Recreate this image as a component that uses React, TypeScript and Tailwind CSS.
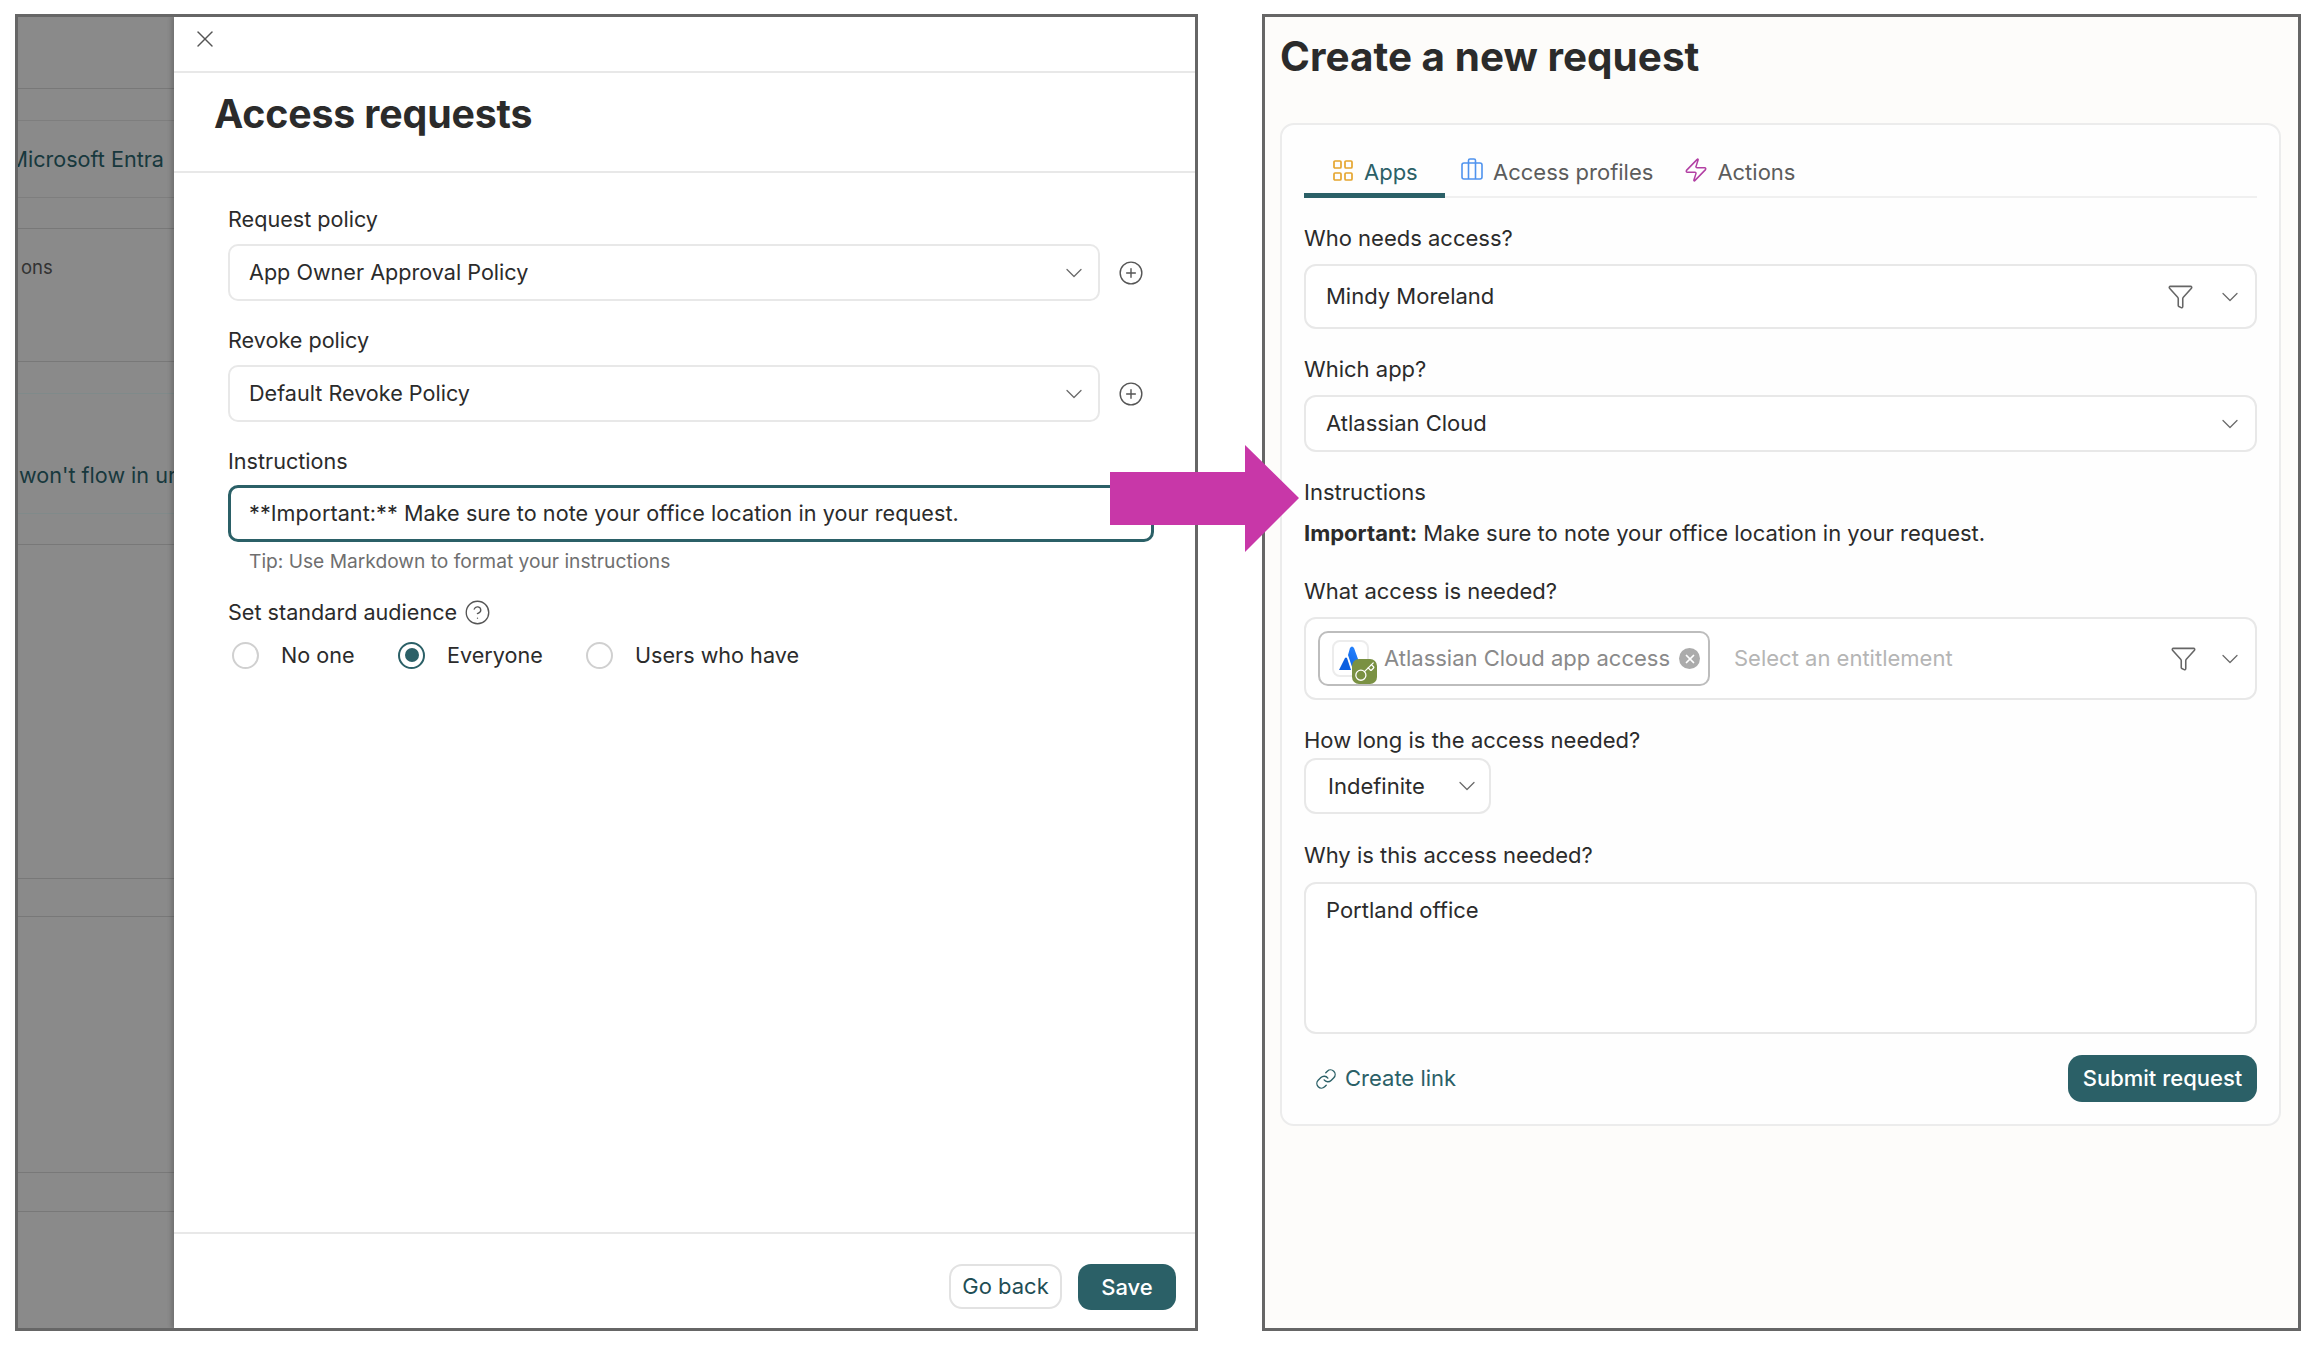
import { ChevronDown, CirclePlus, CircleHelp, Filter, Key, Link, X, Zap } from "lucide-react";

function Label({ children, className = "" }: { children: React.ReactNode; className?: string }) {
  return <div className={`h-[30px] leading-[30px] text-[22px] text-[#2b2b2b] ${className}`}>{children}</div>;
}

function LeftLabel({ children, className = "" }: { children: React.ReactNode; className?: string }) {
  return <div className={`h-[30px] leading-[30px] text-[21.6px] text-[#2b2b2b] ${className}`}>{children}</div>;
}

function Chevron() {
  return <ChevronDown className="w-[28px] h-[28px] text-[#6b6b6b]" strokeWidth={1.1} />;
}

function Select({ value }: { value: string }) {
  return (
    <div className="flex-1 h-[57px] rounded-[10px] border-2 border-[#e8e8e8] bg-white flex items-center justify-between pl-[19px] pr-[10px]">
      <span className="text-[21.6px] text-[#2b2b2b]">{value}</span>
      <Chevron />
    </div>
  );
}

function Radio({ label, checked, width }: { label: string; checked?: boolean; width: string }) {
  return (
    <div className={`flex items-center gap-[22px] h-[30px] ${width}`}>
      {checked ? (
        <span className="w-[27px] h-[27px] rounded-full border-2 border-[#2b6067] flex items-center justify-center">
          <span className="w-[14px] h-[14px] rounded-full bg-[#2b6067]" />
        </span>
      ) : (
        <span className="w-[27px] h-[27px] rounded-full border-2 border-[#d0d0d0] bg-white" />
      )}
      <span className="text-[21.6px] text-[#2b2b2b]">{label}</span>
    </div>
  );
}

export default function App() {
  return (
    <div className="relative w-[2318px] h-[1348px] bg-white overflow-hidden flex items-start pt-[14px] pl-[15px] font-['Inter',sans-serif]">
      {/* Left window */}
      <div className="w-[1183px] h-[1317px] border-[3px] border-[#666666] flex overflow-hidden">
        <div className="w-[156px] shrink-0 bg-[#8a8a8a] text-[21.6px] text-[#17383d] flex flex-col overflow-hidden">
          <div className="h-[72px] border-b border-[#787878]" />
          <div className="h-[32px] border-b border-[#7e7e7e]" />
          <div className="h-[77px] border-b border-[#7e7e7e] flex items-center justify-end pr-[10px] pt-[1px] whitespace-nowrap">Microsoft Entra</div>
          <div className="h-[31px] border-b border-[#787878]" />
          <div className="h-[133px] border-b border-[#787878] pl-[3px] pt-[25px] text-[18.5px] text-[#333333]">ons</div>
          <div className="h-[32px] border-b border-[#7f8a8a]" />
          <div className="h-[120px] border-b border-[#808a8a] pl-[1px] pt-[65px] whitespace-nowrap">won't flow in ur</div>
          <div className="h-[31px] border-b border-[#787878]" />
          <div className="h-[334px] border-b border-[#787878]" />
          <div className="h-[38px] border-b border-[#787878]" />
          <div className="h-[256px] border-b border-[#787878]" />
          <div className="h-[39px] border-b border-[#787878]" />
        </div>

        <div className="flex-1 bg-white flex flex-col shadow-[-3px_0_4px_rgba(0,0,0,0.18)]">
          <div className="h-[56px] shrink-0 border-b-2 border-[#e8e8e8] flex items-start pt-[8px] pl-[17px]">
            <X className="w-[28px] h-[28px] text-[#555555]" strokeWidth={1.2} />
          </div>
          <div className="h-[100px] shrink-0 border-b-2 border-[#e8e8e8] pl-[40px] pt-[13px]">
            <h1 className="text-[39.3px] leading-[56px] font-bold text-[#2b2b2b] tracking-[-0.15px]">Access requests</h1>
          </div>

          <div className="flex-1 pl-[54px] pr-[41px] pt-[31px]">
            <LeftLabel>Request policy</LeftLabel>
            <div className="mt-[10px] flex items-center">
              <Select value="App Owner Approval Policy" />
              <CirclePlus className="w-[26px] h-[26px] ml-[18px] mr-[10px] text-[#555555]" strokeWidth={1.3} />
            </div>
            <LeftLabel className="mt-[24px]">Revoke policy</LeftLabel>
            <div className="mt-[10px] flex items-center">
              <Select value="Default Revoke Policy" />
              <CirclePlus className="w-[26px] h-[26px] ml-[18px] mr-[10px] text-[#555555]" strokeWidth={1.3} />
            </div>
            <LeftLabel className="mt-[24px]">Instructions</LeftLabel>
            <div className="mt-[9px] h-[57px] rounded-[10px] border-[3px] border-[#2b6067] flex items-center pl-[18px] text-[21.6px] tracking-[0.06px] text-[#2b2b2b]">
              **Important:** Make sure to note your office location in your request.
            </div>
            <div className="mt-[6px] h-[26px] leading-[26px] pl-[21px] text-[19.2px] text-[#6f6f6f]">Tip: Use Markdown to format your instructions</div>
            <div className="mt-[23px] h-[30px] flex items-center gap-[7px]">
              <span className="text-[21.6px] text-[#2b2b2b]">Set standard audience</span>
              <CircleHelp className="w-[27px] h-[27px] text-[#555555]" strokeWidth={1.2} />
            </div>
            <div className="mt-[13px] flex items-center pl-[4px]">
              <Radio label="No one" width="w-[166px]" />
              <Radio label="Everyone" checked width="w-[188px]" />
              <Radio label="Users who have" width="w-[260px]" />
            </div>
          </div>

          <div className="h-[96px] shrink-0 border-t-2 border-[#e8e8e8] flex justify-end items-start pt-[30px] pr-[19px] gap-[16px]">
            <button className="w-[113px] h-[45px] rounded-[13px] border-2 border-[#e2e2e2] bg-white text-[22px] text-[#1f4e55]">Go back</button>
            <button className="w-[98px] h-[46px] rounded-[13px] bg-[#2b6067] text-[22px] font-medium text-white">Save</button>
          </div>
        </div>
      </div>

      {/* Right window */}
      <div className="ml-[64px] w-[1039px] h-[1317px] border-[3px] border-[#666666] bg-[#fdfcfa] flex flex-col">
        <div className="h-[106px] shrink-0 pl-[15px] pt-[12px]">
          <h1 className="text-[40.4px] leading-[56px] font-bold text-[#2b2b2b] tracking-[0.05px]">Create a new request</h1>
        </div>
        <div className="ml-[15px] w-[1001px] h-[1003px] rounded-[14px] border-2 border-[#ececec] bg-[#fefefe] px-[22px]">
          <div className="h-[73px] flex items-end border-b-2 border-[#f0f0f0]">
            <div className="w-[141px] h-[54px] -mb-[2px] border-b-[5px] border-[#2b6067] flex items-start pl-[29px] pt-[12px] gap-[11px] text-[22px] text-[#2b6067]">
              <svg width="20" height="21" viewBox="0 0 20 21" fill="none" stroke="#e5a52e" strokeWidth="1.7" className="mt-[4px]">
                <rect x="1" y="1" width="7" height="7" rx="1" />
                <rect x="12" y="1" width="7" height="7" rx="1" />
                <rect x="1" y="13" width="7" height="7" rx="1" />
                <rect x="12" y="13" width="7" height="7" rx="1" />
              </svg>
              <span>Apps</span>
            </div>
            <div className="ml-[16px] h-[54px] flex items-start pt-[14px] gap-[10px] text-[22px] text-[#5c5c5c]">
              <svg width="22" height="22" viewBox="0 0 22 22" fill="none" stroke="#4f93ee" strokeWidth="1.6" className="mt-[2px]">
                <rect x="1" y="5" width="20" height="16" rx="2" />
                <path d="M7.5 5V2.500A1.5 1.5 0 0 1 9 1h4a1.5 1.5 0 0 1 1.5 1.5V5M7.5 5v16M14.500 5v16" />
              </svg>
              <span>Access profiles</span>
            </div>
            <div className="ml-[30px] h-[54px] flex items-start pt-[14px] gap-[8px] text-[22px] text-[#5c5c5c]">
              <Zap className="w-[26px] h-[26px] mt-[1px] text-[#b23fa3]" strokeWidth={1.4} />
              <span>Actions</span>
            </div>
          </div>

          <Label className="mt-[25px]">Who needs access?</Label>
          <div className="mt-[11px] h-[65px] rounded-[12px] border-2 border-[#e8e8e8] bg-white flex items-center pl-[20px] pr-[11px]">
            <span className="flex-1 text-[22px] text-[#2b2b2b]">Mindy Moreland</span>
            <Filter className="w-[27px] h-[27px] text-[#666666] mr-[22px]" strokeWidth={1.4} />
            <Chevron />
          </div>

          <Label className="mt-[25px]">Which app?</Label>
          <div className="mt-[11px] h-[57px] rounded-[12px] border-2 border-[#e8e8e8] bg-white flex items-center justify-between pl-[20px] pr-[11px]">
            <span className="text-[22px] text-[#2b2b2b]">Atlassian Cloud</span>
            <Chevron />
          </div>

          <Label className="mt-[25px]">Instructions</Label>
          <div className="mt-[11px] h-[30px] leading-[30px] text-[22px] text-[#2b2b2b]">
            <strong className="font-bold">Important:</strong> Make sure to note your office location in your request.
          </div>

          <Label className="mt-[28px]">What access is needed?</Label>
          <div className="mt-[11px] h-[83px] rounded-[12px] border-2 border-[#e8e8e8] bg-white flex items-center pl-[12px] pr-[11px]">
            <div className="w-[392px] h-[55px] rounded-[10px] border-2 border-[#bdbdbd] flex items-center pl-[12px] relative">
              <div className="w-[37px] h-[37px] rounded-[8px] border-2 border-[#ececec] bg-white relative shrink-0">
                <svg width="26" height="28" viewBox="0 0 26 28" className="absolute left-[4px] top-[2px]">
                  <defs>
                    <linearGradient id="atl" x1="0" y1="1" x2="0.5" y2="0">
                      <stop offset="0" stopColor="#0b5fe0" />
                      <stop offset="1" stopColor="#2684ff" />
                    </linearGradient>
                  </defs>
                  <path d="M1 26 L7 14 Q8 13 9 14 L13 26 Z" fill="#0b5fe0" />
                  <path d="M12 4 Q14 1 16 4 L24 26 L15 26 Q11 14 10 11 Z" fill="url(#atl)" />
                </svg>
                <div className="absolute left-[18px] top-[17px] w-[25px] h-[25px] rounded-[7px] bg-[#7a9143] flex items-center justify-center">
                  <Key className="w-[22px] h-[22px] text-white" strokeWidth={1.4} />
                </div>
              </div>
              <span className="ml-[15px] text-[22px] text-[#8a8a8a] whitespace-nowrap">Atlassian Cloud app access</span>
              <span className="absolute right-[8px] top-[15px] w-[21px] h-[21px] rounded-full bg-[#ababab] flex items-center justify-center">
                <X className="w-[14px] h-[14px] text-white" strokeWidth={3} />
              </span>
            </div>
            <span className="flex-1 ml-[24px] text-[22px] text-[#b5b5b5]">Select an entitlement</span>
            <Filter className="w-[27px] h-[27px] text-[#666666] mr-[19px]" strokeWidth={1.4} />
            <Chevron />
          </div>

          <Label className="mt-[25px]">How long is the access needed?</Label>
          <div className="mt-[3px] w-[187px] h-[56px] rounded-[12px] border-2 border-[#e8e8e8] bg-white flex items-center justify-between pl-[22px] pr-[8px]">
            <span className="text-[22px] text-[#2b2b2b]">Indefinite</span>
            <Chevron />
          </div>

          <Label className="mt-[26px]">Why is this access needed?</Label>
          <div className="mt-[12px] h-[152px] rounded-[12px] border-2 border-[#e8e8e8] bg-white pl-[20px] pt-[10px] text-[22px] text-[#2b2b2b]">
            Portland office
          </div>

          <div className="mt-[21px] flex items-center justify-between">
            <div className="flex items-center gap-[8px] pl-[11px] text-[22px] text-[#2b6067]">
              <Link className="w-[22px] h-[22px]" strokeWidth={1.5} />
              <span>Create link</span>
            </div>
            <button className="w-[189px] h-[47px] rounded-[14px] bg-[#2b6067] text-[22px] font-medium text-white">Submit request</button>
          </div>
        </div>
      </div>

      {/* Arrow overlay */}
      <svg width="190" height="107" viewBox="0 0 190 107" className="absolute left-[1110px] top-[445px]">
        <path d="M0 27H135V0L189 53L135 107V80H0Z" fill="#c837a8" />
      </svg>
    </div>
  );
}
